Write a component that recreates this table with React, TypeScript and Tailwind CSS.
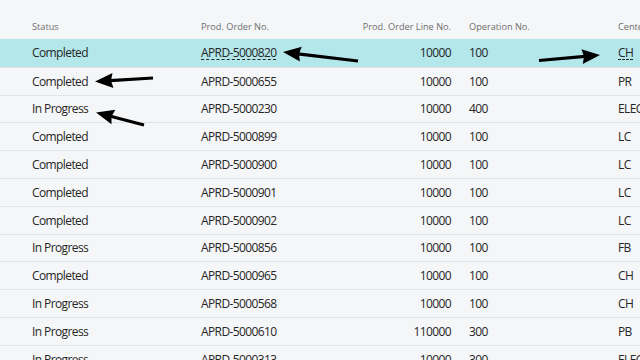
type Row = {
  status: string;
  order: string;
  line: string;
  op: string;
  center: string;
};

const rows: Row[] = [
  { status: "Completed", order: "APRD-5000820", line: "10000", op: "100", center: "CH" },
  { status: "Completed", order: "APRD-5000655", line: "10000", op: "100", center: "PR" },
  { status: "In Progress", order: "APRD-5000230", line: "10000", op: "400", center: "ELEC" },
  { status: "Completed", order: "APRD-5000899", line: "10000", op: "100", center: "LC" },
  { status: "Completed", order: "APRD-5000900", line: "10000", op: "100", center: "LC" },
  { status: "Completed", order: "APRD-5000901", line: "10000", op: "100", center: "LC" },
  { status: "Completed", order: "APRD-5000902", line: "10000", op: "100", center: "LC" },
  { status: "In Progress", order: "APRD-5000856", line: "10000", op: "100", center: "FB" },
  { status: "Completed", order: "APRD-5000965", line: "10000", op: "100", center: "CH" },
  { status: "In Progress", order: "APRD-5000568", line: "10000", op: "100", center: "CH" },
  { status: "In Progress", order: "APRD-5000610", line: "110000", op: "300", center: "PB" },
  { status: "In Progress", order: "APRD-5000313", line: "10000", op: "300", center: "ELEC" },
];

// tail -> tip, drawn as a thick stroke with a filled head
const Arrow = ({ x1, y1, x2, y2 }: { x1: number; y1: number; x2: number; y2: number }) => {
  const dx = x2 - x1;
  const dy = y2 - y1;
  const len = Math.hypot(dx, dy);
  const ux = dx / len;
  const uy = dy / len;
  const head = 18;
  const half = 7.5;
  const bx = x2 - ux * head;
  const by = y2 - uy * head;
  const px = -uy * half;
  const py = ux * half;
  return (
    <g>
      <line x1={x1} y1={y1} x2={bx + ux * 3} y2={by + uy * 3} stroke="#000" strokeWidth={3.2} />
      <polygon points={`${x2},${y2} ${bx + px},${by + py} ${bx + ux * 2},${by + uy * 2} ${bx - px},${by - py}`} fill="#000" />
    </g>
  );
};

const App = () => {
  return (
    <div
      className="relative h-[360px] w-full overflow-hidden bg-[#f5f6f8] text-[#262626]"
      style={{ fontFamily: '"Open Sans", "Noto Sans", sans-serif' }}
    >
      <div className="flex h-[39px] items-center pt-[14px] pl-[32px] text-[9.2px] text-[#6e6e6e]">
        <div className="w-[169px] shrink-0">Status</div>
        <div className="w-[150px] shrink-0">Prod. Order No.</div>
        <div className="w-[100px] shrink-0 text-right">Prod. Order Line No.</div>
        <div className="w-[167px] shrink-0 pl-[18px]">Operation No.</div>
        <div className="whitespace-nowrap">Center</div>
      </div>
      {rows.map((r, i) => (
        <div
          key={r.order}
          className={
            i === 0
              ? "flex h-[27.8px] items-center bg-[#b3e7ea] pt-px pl-[32px] text-[12px] tracking-[-0.6px]"
              : "flex h-[27.8px] items-center border-t border-[#e2e3e6] pt-px pl-[32px] text-[12px] tracking-[-0.6px]"
          }
        >
          <div className="w-[169px] shrink-0">{r.status}</div>
          <div className="w-[150px] shrink-0">
            <span className={i === 0 ? "underline decoration-dashed decoration-1 underline-offset-2" : ""}>{r.order}</span>
          </div>
          <div className="w-[100px] shrink-0 text-right">{r.line}</div>
          <div className="w-[167px] shrink-0 pl-[18px]">{r.op}</div>
          <div className="whitespace-nowrap">
            <span className={i === 0 ? "underline decoration-dashed decoration-1 underline-offset-2" : ""}>{r.center}</span>
          </div>
        </div>
      ))}
      <svg className="pointer-events-none absolute inset-0" width="640" height="360" viewBox="0 0 640 360">
        <Arrow x1={358} y1={61} x2={283} y2={52} />
        <Arrow x1={153} y1={78} x2={95} y2={81.5} />
        <Arrow x1={144} y1={125} x2={96} y2={112.5} />
        <Arrow x1={539} y1={60.5} x2={600} y2={55} />
      </svg>
    </div>
  );
};

export default App;
